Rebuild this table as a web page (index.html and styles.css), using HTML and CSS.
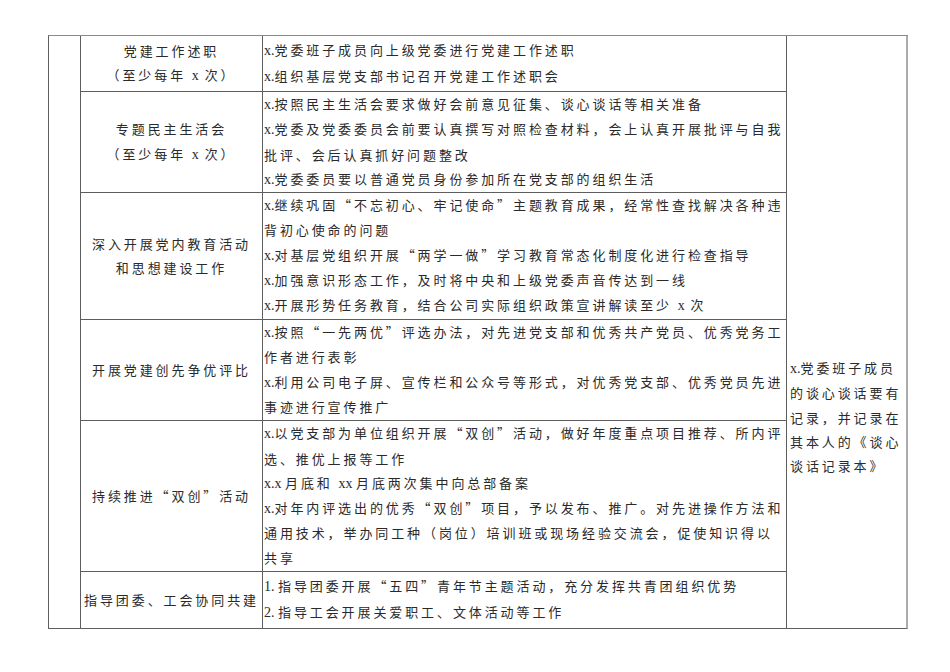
FILE: index.html
```html
<!DOCTYPE html>
<html lang="zh-CN">
<head>
<meta charset="utf-8">
<title>党建工作表</title>
<link rel="stylesheet" href="styles.css">
</head>
<body>
<table class="sheet">
  <tr>
    <td class="blank" rowspan="6"></td>
    <td class="item r1">党建工作述职<br>（至少每年 <span class="l">x</span> 次）</td>
    <td class="detail r1">
      <div><span class="l">x.</span>党委班子成员向上级党委进行党建工作述职</div>
      <div><span class="l">x.</span>组织基层党支部书记召开党建工作述职会</div>
    </td>
    <td class="note" rowspan="6">
      <div><span class="l">x.</span>党委班子成员</div>
      <div>的谈心谈话要有</div>
      <div>记录，并记录在</div>
      <div>其本人的《谈心</div>
      <div>谈话记录本》</div>
    </td>
  </tr>
  <tr>
    <td class="item r2">专题民主生活会<br>（至少每年 <span class="l">x</span> 次）</td>
    <td class="detail r2">
      <div><span class="l">x.</span>按照民主生活会要求做好会前意见征集、谈心谈话等相关准备</div>
      <div><span class="l">x.</span>党委及党委委员会前要认真撰写对照检查材料，会上认真开展批评与自我</div>
      <div>批评、会后认真抓好问题整改</div>
      <div><span class="l">x.</span>党委委员要以普通党员身份参加所在党支部的组织生活</div>
    </td>
  </tr>
  <tr>
    <td class="item r3">深入开展党内教育活动<br>和思想建设工作</td>
    <td class="detail r3">
      <div><span class="l">x.</span>继续巩固“不忘初心、牢记使命”主题教育成果，经常性查找解决各种违</div>
      <div>背初心使命的问题</div>
      <div><span class="l">x.</span>对基层党组织开展“两学一做”学习教育常态化制度化进行检查指导</div>
      <div><span class="l">x.</span>加强意识形态工作，及时将中央和上级党委声音传达到一线</div>
      <div><span class="l">x.</span>开展形势任务教育，结合公司实际组织政策宣讲解读至少 <span class="l">x</span> 次</div>
    </td>
  </tr>
  <tr>
    <td class="item r4">开展党建创先争优评比</td>
    <td class="detail r4">
      <div><span class="l">x.</span>按照“一先两优”评选办法，对先进党支部和优秀共产党员、优秀党务工</div>
      <div>作者进行表彰</div>
      <div><span class="l">x.</span>利用公司电子屏、宣传栏和公众号等形式，对优秀党支部、优秀党员先进</div>
      <div>事迹进行宣传推广</div>
    </td>
  </tr>
  <tr>
    <td class="item r5">持续推进“双创”活动</td>
    <td class="detail r5">
      <div><span class="l">x.</span>以党支部为单位组织开展“双创”活动，做好年度重点项目推荐、所内评</div>
      <div>选、推优上报等工作</div>
      <div><span class="l">x.x </span>月底和 <span class="l">xx </span>月底两次集中向总部备案</div>
      <div><span class="l">x.</span>对年内评选出的优秀“双创”项目，予以发布、推广。对先进操作方法和</div>
      <div>通用技术，举办同工种（岗位）培训班或现场经验交流会，促使知识得以</div>
      <div>共享</div>
    </td>
  </tr>
  <tr>
    <td class="item r6">指导团委、工会协同共建</td>
    <td class="detail r6">
      <div><span class="l">1. </span>指导团委开展“五四”青年节主题活动，充分发挥共青团组织优势</div>
      <div><span class="l">2. </span>指导工会开展关爱职工、文体活动等工作</div>
    </td>
  </tr>
</table>
</body>
</html>
```
FILE: styles.css
```css
html, body {
  margin: 0;
  padding: 0;
  background: #ffffff;
}

.sheet {
  margin: 35px 0 0 48px;
  border-collapse: separate;
  border-spacing: 0;
  table-layout: fixed;
  width: 860px;
  border-top: 1px solid #8a8a8a;
  border-left: 1px solid #5e5e5e;
  font-family: "Noto Sans CJK SC", "Liberation Serif", sans-serif;
  font-size: 13px;
  letter-spacing: 2.9px;
  line-height: 24.3px;
  color: #2a2a2a;
}

.sheet td {
  box-sizing: border-box;
  padding: 0;
  border-right: 1px solid #5e5e5e;
  border-bottom: 1px solid #5e5e5e;
  white-space: nowrap;
}

.l {
  font-family: "Liberation Serif", serif;
  font-size: 14px;
  letter-spacing: 0;
}

.sheet .blank {
  width: 32px;
}

.sheet .item {
  width: 182px;
  text-align: center;
  vertical-align: middle;
}

.sheet .detail {
  width: 524px;
  padding-left: 1px;
  vertical-align: middle;
  text-align: left;
}

.sheet .note {
  width: 121px;
  vertical-align: top;
  padding: 320px 0 0 3px;
  border-right: 2px solid #ababab;
}

.sheet .r1 { height: 56px; }
.sheet .r2 { height: 99px; }
.sheet .r3 { height: 126px; }
.sheet .r4 { height: 101px; }
.sheet .r5 { height: 151px; }
.sheet .r6 { height: 57px; }
```
